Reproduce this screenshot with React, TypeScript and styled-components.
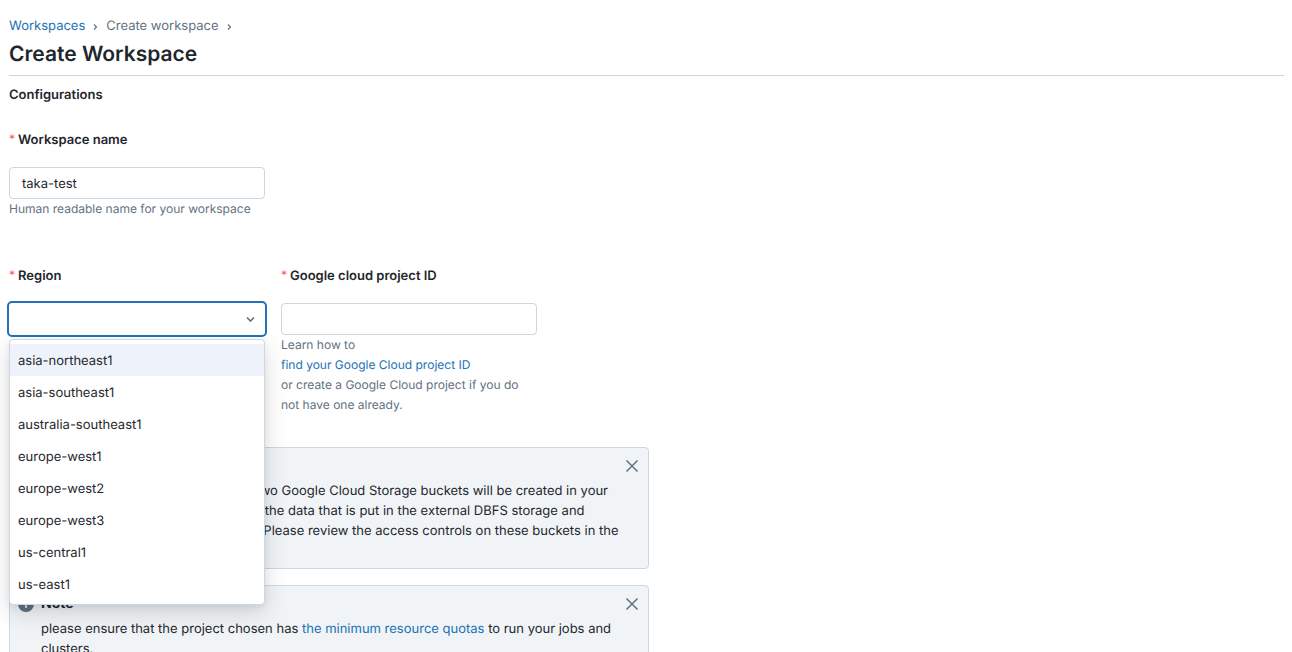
import React, { useState } from "react";
import styled, { createGlobalStyle } from "styled-components";

const GlobalStyle = createGlobalStyle`
  *, *::before, *::after { box-sizing: border-box; }
  body {
    margin: 0;
    background: #fff;
    color: #1f272d;
    font-family: Inter, "Liberation Sans", sans-serif;
    font-size: 13px;
    line-height: 20px;
    text-rendering: geometricPrecision;
  }
  button, input, select { font: inherit; color: inherit; text-rendering: inherit; }
`;

const Page = styled.div`
  padding: 16px 8px 16px 9px;
`;

const Breadcrumbs = styled.nav`
  display: flex;
  align-items: center;
  gap: 8px;
  color: #5f7281;
`;

const Chevron = styled.svg`
  display: block;
  width: 5px;
  height: 8px;
  margin-top: 2px;
  fill: none;
  stroke: #5f7281;
  stroke-width: 1.2;
`;

const Link = styled.a`
  color: #2272b4;
  text-decoration: none;
`;

const Title = styled.h1`
  margin: 0;
  padding: 5px 0 6px;
  border-bottom: 1px solid #cbd6dd;
  font-size: 21px;
  line-height: 28px;
  font-weight: 600;
`;

const SectionTitle = styled.h2`
  margin: 9px 0 25px;
  font-size: 13px;
  line-height: 20px;
  font-weight: 600;
`;

const Form = styled.form`
  max-width: 640px;
`;

const FieldRow = styled.div<{ $after: number }>`
  display: flex;
  gap: 16px;
  margin-bottom: ${(p) => p.$after}px;
`;

const Field = styled.div`
  flex: 0 1 256px;
  min-width: 0;
`;

const Label = styled.label`
  display: flex;
  gap: 3px;
  margin-bottom: 17px;
  font-weight: 600;
`;

const Required = styled.span`
  color: #ff4d4f;
  font-size: 12px;
  line-height: 18px;
  font-weight: 400;
`;

const TextInput = styled.input`
  display: block;
  width: 100%;
  height: 32px;
  padding: 2px 12px 0;
  border: 1px solid #c9d8e4;
  border-radius: 4px;
  background: #fff;
  outline: none;
`;

const Hint = styled.div`
  color: #5f7281;
  font-size: 12px;
  line-height: 20px;

  a { display: block; }
`;

const SelectWrap = styled.div`
  position: relative;
`;

const Select = styled.select`
  display: block;
  appearance: none;
  width: 100%;
  height: 32px;
  padding: 0 28px 0 12px;
  border: 0;
  border-radius: 3px;
  background: #fff;
  outline: 2px solid #2272b4;
`;

const SelectArrow = styled.svg`
  position: absolute;
  top: 13px;
  right: 10px;
  width: 9px;
  height: 7px;
  fill: none;
  stroke: #5f7281;
  stroke-width: 1.6;
  pointer-events: none;
`;

const Menu = styled.ul`
  position: absolute;
  z-index: 1;
  top: 100%;
  left: 0;
  right: 0;
  margin: 4px 0 0;
  padding: 4px 0;
  border: 1px solid #c9d8e4;
  border-radius: 4px;
  background: #fff;
  list-style: none;
  box-shadow: 0 3px 6px rgba(0, 0, 0, 0.06), 0 8px 24px rgba(0, 0, 0, 0.14);
`;

const Option = styled.li<{ $active: boolean }>`
  padding: 7px 8px 5px;
  background: ${(p) => (p.$active ? "#eef3fb" : "transparent")};
  cursor: pointer;
`;

const Alert = styled.section`
  display: grid;
  grid-template-columns: 16px 1fr 16px;
  column-gap: 7px;
  row-gap: 5px;
  margin-bottom: 16px;
  padding: 8px 8px 7px;
  border: 1px solid #c9d8e4;
  border-radius: 4px;
  background: #f0f4f7;
`;

const InfoIcon = styled.svg`
  width: 16px;
  height: 16px;
  margin-top: 2px;
`;

const AlertTitle = styled.h3`
  margin: 0;
  font-size: 14px;
  line-height: 20px;
  font-weight: 700;
`;

const AlertText = styled.p`
  grid-column: 2 / 4;
  margin: 0;
  padding-right: 16px;
`;

const CloseButton = styled.button`
  width: 16px;
  height: 20px;
  padding: 0;
  border: 0;
  background: none;
  cursor: pointer;

  svg {
    display: block;
    width: 16px;
    height: 16px;
    fill: none;
    stroke: #5f7281;
    stroke-width: 1.5;
  }
`;

const regions = [
  "asia-northeast1",
  "asia-southeast1",
  "australia-southeast1",
  "europe-west1",
  "europe-west2",
  "europe-west3",
  "us-central1",
  "us-east1",
];

function Separator() {
  return (
    <Chevron viewBox="0 0 5 8" aria-hidden="true">
      <path d="M1 1.5 3.5 4 1 6.5" />
    </Chevron>
  );
}

function Note({ children }: { children: React.ReactNode }) {
  const [open, setOpen] = useState(true);
  if (!open) return null;
  return (
    <Alert>
      <InfoIcon viewBox="0 0 16 16" aria-hidden="true">
        <circle cx="8" cy="8" r="8" fill="#5f7281" />
        <path d="M8 7v5M8 4v1.6" stroke="#fff" strokeWidth="1.5" />
      </InfoIcon>
      <AlertTitle>Note</AlertTitle>
      <CloseButton type="button" aria-label="Close" onClick={() => setOpen(false)}>
        <svg viewBox="0 0 16 16">
          <path d="m2.5 2.5 11 11M13.5 2.5l-11 11" />
        </svg>
      </CloseButton>
      <AlertText>{children}</AlertText>
    </Alert>
  );
}

function RegionSelect() {
  const [open, setOpen] = useState(true);
  const [active, setActive] = useState(0);
  const [value, setValue] = useState("");
  return (
    <SelectWrap>
      <Select
        id="region"
        value={value}
        onChange={(e) => setValue(e.target.value)}
        onMouseDown={(e) => {
          e.preventDefault();
          setOpen(!open);
        }}
      >
        <option value="" />
        {regions.map((r) => (
          <option key={r}>{r}</option>
        ))}
      </Select>
      <SelectArrow viewBox="0 0 9 7" aria-hidden="true">
        <path d="m1 1.5 3.5 3.5L8 1.5" />
      </SelectArrow>
      {open && (
        <Menu role="listbox" aria-label="Region">
          {regions.map((r, i) => (
            <Option
              key={r}
              role="option"
              aria-selected={r === value}
              $active={i === active}
              onMouseEnter={() => setActive(i)}
              onClick={() => {
                setValue(r);
                setOpen(false);
              }}
            >
              {r}
            </Option>
          ))}
        </Menu>
      )}
    </SelectWrap>
  );
}

export default function App() {
  return (
    <Page>
      <GlobalStyle />
      <Breadcrumbs aria-label="Breadcrumb">
        <Link href="#workspaces">Workspaces</Link>
        <Separator />
        <span>Create workspace</span>
        <Separator />
      </Breadcrumbs>
      <Title>Create Workspace</Title>
      <SectionTitle>Configurations</SectionTitle>
      <Form>
        <FieldRow $after={47}>
          <Field>
            <Label htmlFor="name">
              <Required>*</Required>Workspace name
            </Label>
            <TextInput id="name" defaultValue="taka-test" />
            <Hint>Human readable name for your workspace</Hint>
          </Field>
        </FieldRow>
        <FieldRow $after={32}>
          <Field>
            <Label htmlFor="region">
              <Required>*</Required>Region
            </Label>
            <RegionSelect />
          </Field>
          <Field>
            <Label htmlFor="project">
              <Required>*</Required>Google cloud project ID
            </Label>
            <TextInput id="project" />
            <Hint>
              Learn how to <Link href="#project-id">find your Google Cloud project ID</Link> or
              create a Google Cloud project if you do not have one already.
            </Hint>
          </Field>
        </FieldRow>
        <Note>
          When you create your workspace, two Google Cloud Storage buckets will be created in your
          GCP project. Both buckets will store the data that is put in the external DBFS storage and
          internal DBFS storage, respectively. Please review the access controls on these buckets in
          the GCP console.
        </Note>
        <Note>
          please ensure that the project chosen has{" "}
          <Link href="#quotas">the minimum resource quotas</Link> to run your jobs and clusters.
        </Note>
      </Form>
    </Page>
  );
}
